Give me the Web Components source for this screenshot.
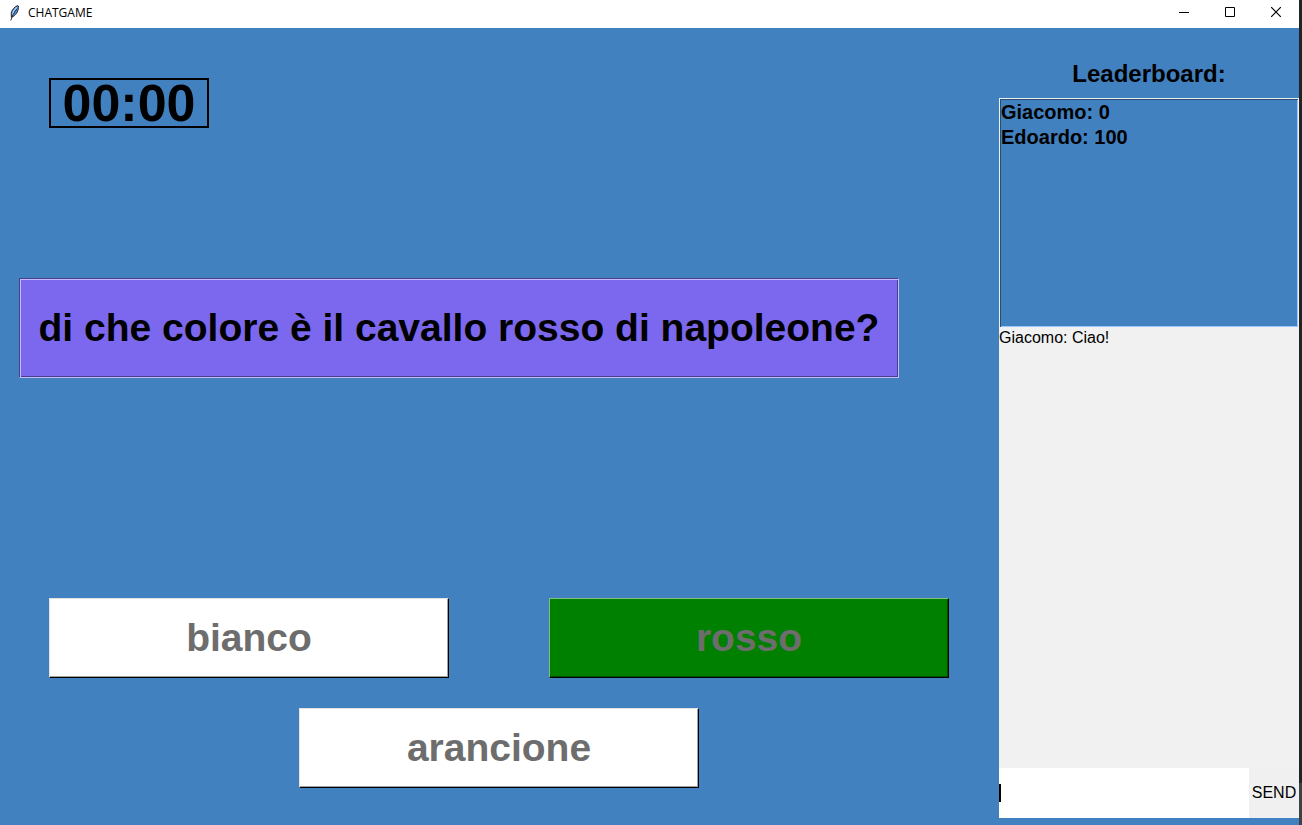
<!DOCTYPE html>
<html lang="it">
<head>
<meta charset="utf-8">
<title>CHATGAME</title>
<style>
  html, body { margin: 0; }
  body { font-family: "Liberation Sans", Arial, sans-serif; color: #000; }
</style>
</head>
<body>
<chat-game>
  <title-bar slot="title">CHATGAME</title-bar>
  <game-board slot="board">
    <game-timer slot="timer">00:00</game-timer>
    <question-card slot="question">di che colore è il cavallo rosso di napoleone?</question-card>
    <answer-button>bianco</answer-button>
    <answer-button correct>rosso</answer-button>
    <answer-button wide>arancione</answer-button>
  </game-board>
  <side-panel slot="side">
    <leader-board slot="scores" heading="Leaderboard:">
      <li>Giacomo: 0</li>
      <li>Edoardo: 100</li>
    </leader-board>
    <chat-log slot="chat"><div>Giacomo: Ciao!</div></chat-log>
    <message-form slot="form">SEND</message-form>
  </side-panel>
</chat-game>
<script>
const define = (name, html, setup) => {
  const template = document.createElement('template');
  template.innerHTML = html;
  customElements.define(name, class extends HTMLElement {
    constructor() {
      super();
      this.attachShadow({ mode: 'open' }).append(template.content.cloneNode(true));
    }
    connectedCallback() { if (setup) setup(this, this.shadowRoot); }
  });
};

define('chat-game', `
  <style>
    :host { display: flex; flex-direction: column; box-sizing: border-box; min-height: 100vh;
      padding-right: 3px; background: linear-gradient(#202425 0 783px, #3f4242 783px); }
    .body { flex: 1; display: flex; background: #4181c0; }
    ::slotted(game-board) { flex: 1; }
    ::slotted(side-panel) { flex: 0 0 300px; }
  </style>
  <slot name="title"></slot>
  <div class="body"><slot name="board"></slot><slot name="side"></slot></div>`);

define('title-bar', `
  <style>
    :host { display: flex; align-items: center; height: 28px; background: #fff;
      font: 12px/16px "Open Sans", "Noto Sans", sans-serif; }
    .name { flex: 1; display: flex; align-items: center; gap: 8px; padding: 0 0 3px 8px; }
    button { width: 46px; height: 28px; padding: 0 0 4px; border: 0; background: none; display: grid; place-items: center; }
    svg { display: block; }
  </style>
  <div class="name">
    <svg width="12" height="16" viewBox="0 0 12 16" aria-hidden="true">
      <path d="M9.6.6C6.6 1.6 3.8 5 3.2 8.2L3.4 12.4l2-1C8.6 9.400 10.900 5 10.400 1z" fill="#4f8fd6" stroke="#1a1a1a" stroke-width=".9"/>
      <path d="M8.600 2.400C6.600 4.600 5 7 4.400 9.500" fill="none" stroke="#b9d8f4" stroke-width="1.200"/>
      <path d="M8.800 4C6 7.500 4 11 2.800 15.500" fill="none" stroke="#222" stroke-width=".9"/>
    </svg>
    <slot></slot>
  </div>
  <button type="button" aria-label="Minimize"><svg width="10" height="10"><path d="M0 5.5h10" stroke="#000"/></svg></button>
  <button type="button" aria-label="Maximize"><svg width="10" height="10"><path d="M.5.5h9v9h-9z" fill="none" stroke="#000"/></svg></button>
  <button type="button" aria-label="Close"><svg width="10" height="10"><path d="M0 0l10 10M10 0L0 10" stroke="#000" stroke-width="1.2"/></svg></button>`);

define('game-board', `
  <style>
    :host { display: flex; flex-direction: column; box-sizing: border-box; padding: 50px 50px 37px 49px; }
    .question { flex: 1; display: flex; align-items: center; padding-bottom: 70px; margin: 0 50px 0 -30px; }
    ::slotted(game-timer) { align-self: flex-start; }
    ::slotted(question-card) { flex: 1; }
    .answers { display: grid; grid-template-columns: 1fr 1fr; gap: 30px 100px; }
    ::slotted(answer-button[wide]) { grid-column: 1 / -1; justify-self: center; width: calc(50% - 50px); }
  </style>
  <slot name="timer"></slot>
  <div class="question"><slot name="question"></slot></div>
  <div class="answers"><slot></slot></div>`);

define('game-timer', `
  <style>
    :host { display: block; box-sizing: border-box; width: 160px; height: 50px; border: 2px solid #000;
      font-size: 52px; line-height: 46px; font-weight: bold; text-align: center; }
  </style><slot></slot>`);

define('question-card', `
  <style>
    :host { display: grid; place-items: center; box-sizing: border-box; min-height: 100px; text-align: center;
      font-size: 39px; line-height: 48px; font-weight: bold; background: #7b68ee;
      border: 1px solid; border-color: #4a3e8f #c3baff #c3baff #4a3e8f;
      box-shadow: inset 1px 1px #c3baff, inset -1px -1px #4a3e8f; }
  </style><slot></slot>`);

define('answer-button', `
  <style>
    :host { display: block; }
    button { display: block; box-sizing: border-box; width: 100%; height: 80px; padding: 0;
      font: bold 39px/48px "Liberation Sans", Arial, sans-serif; color: #6d6d6d; background: #fff;
      border: 1px solid; border-color: #e3e3e3 #000 #000 #e3e3e3; box-shadow: inset -1px -1px #a0a0a0; }
    :host([correct]) button { background: #008000; border-color: #7fbf7f #000 #000 #7fbf7f;
      box-shadow: inset -1px -1px #004d00; }
  </style><button type="button"><slot></slot></button>`);

define('side-panel', `
  <style>
    :host { display: flex; flex-direction: column; box-sizing: border-box; padding: 22px 0 7px; }
    ::slotted(chat-log) { flex: 1; }
  </style>
  <slot name="scores"></slot><slot name="chat"></slot><slot name="form"></slot>`);

define('leader-board', `
  <style>
    :host { display: block; font-weight: bold; }
    h2 { margin: 0; font-size: 24px; line-height: 48px; text-align: center; }
    ul { margin: 0; padding: 1px; list-style: none; box-sizing: border-box; height: 230px; overflow: hidden;
      font-size: 20px; line-height: 25px; border: 1px solid #f0f0f0;
      box-shadow: inset 1px 1px #274d73, inset -1px -1px #a0c4ff; }
  </style>
  <h2></h2><ul><slot></slot></ul>`,
  (host, root) => { root.querySelector('h2').textContent = host.getAttribute('heading'); });

define('chat-log', `
  <style>
    :host { display: block; background: #f1f1f1; font-size: 16px; line-height: 20px; }
  </style><slot></slot>`);

define('message-form', `
  <style>
    form { display: flex; height: 50px; margin: 0; }
    :host { display: block; }
    input, button { box-sizing: border-box; border: 0; border-radius: 0; font: 16px/20px "Liberation Sans", Arial, sans-serif; color: #000; }
    input { flex: 1; min-width: 0; padding: 0 3px; outline: 0;
      background: #fff linear-gradient(#000, #000) left center / 2px 18px no-repeat; }
    button { width: 50px; padding: 0; background: #f0f0f0; }
  </style>
  <form><input type="text" aria-label="Message"><button type="button"><slot></slot></button></form>`);
</script>
</body>
</html>
